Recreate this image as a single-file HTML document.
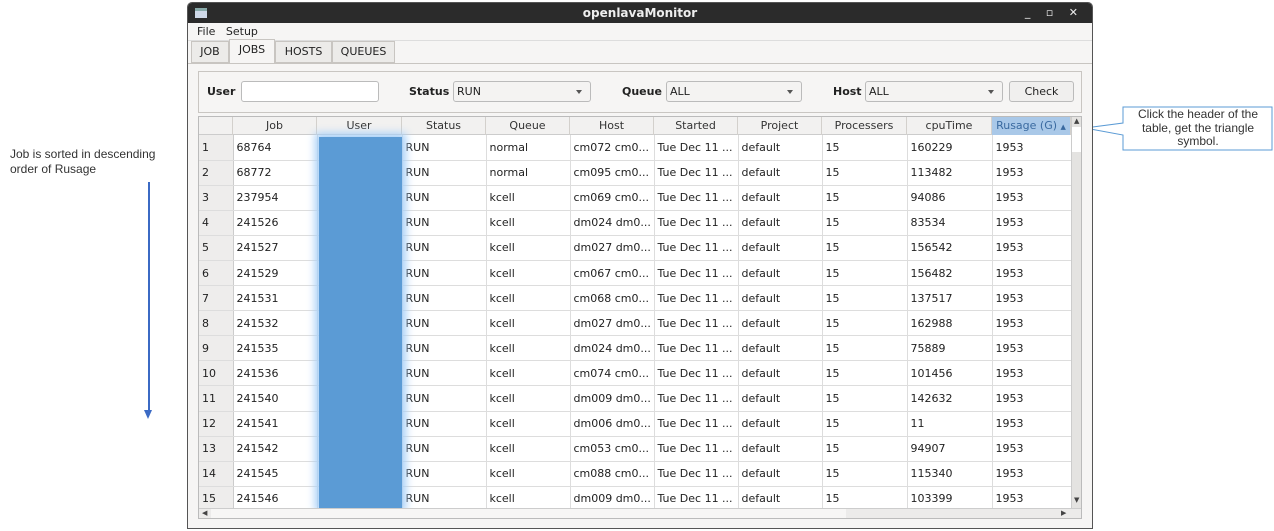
<!DOCTYPE html>
<html><head><meta charset="utf-8"><style>
*{margin:0;padding:0;box-sizing:border-box}
body{width:1274px;height:531px;background:#fff;position:relative;overflow:hidden;font-family:"DejaVu Sans","Liberation Sans",sans-serif;font-size:11px;color:#222}
.a{position:absolute}
.win{left:187px;top:2px;width:906px;height:527px;background:#f6f5f4;border:1px solid #555;border-radius:5px 5px 0 0;overflow:hidden}
.title{left:0;top:0;width:904px;height:20px;background:#2b2b2b;color:#eee;font-weight:bold;font-size:12px;text-align:center;line-height:20px}
.tab{top:39px;height:22px;border:1px solid #c8c5c1;background:#ecebe9;line-height:20px;text-align:center}
.filt{left:10px;top:68px;width:884px;height:42px;border:1px solid #c9c6c2;background:#f6f5f4}
.inp{background:#fff;border:1px solid #bbb;border-radius:3px;height:21px;top:78px;line-height:19px;padding-left:3px}
.cmb{background:#f4f3f2;border:1px solid #bbb;border-radius:3px;height:21px;top:78px;line-height:19px;padding-left:3px}
.cmb:after{content:"";position:absolute;right:8px;top:8px;border:3.5px solid transparent;border-top:4px solid #555}
.lbl{top:78px;line-height:21px;font-weight:bold}
table{border-collapse:collapse;table-layout:fixed}
td{height:25.1px;border-right:1px solid #ddd;border-bottom:1px solid #ddd;padding-left:3px;white-space:nowrap;overflow:hidden;background:#fff}
td.n{background:#eeedec;border-right:1px solid #ccc}
.hd{top:116px;height:18px;background:#f2f1f0;border-bottom:1px solid #ccc}
.hd div{position:absolute;top:0;height:18px;line-height:17px;text-align:center;border-right:1px solid #d3d0cc;color:#333}
</style></head><body>
<div class="a" style="left:10px;top:147px;font-family:'Liberation Sans',sans-serif;font-size:12px;line-height:15px;color:#333">Job is sorted in descending<br>order of Rusage</div>
<div class="a" style="left:148px;top:182px;width:1.5px;height:230px;background:#3b6ac4"></div>
<div class="a" style="left:144px;top:410px;border:4.5px solid transparent;border-top:9px solid #3b6ac4"></div>
<svg class="a" style="left:1080px;top:105px" width="194" height="50"><path d="M43 2H192V45H43V30L5 23L43 18Z" fill="#fff" stroke="#5b9bd5" stroke-width="1"/></svg>
<div class="a" style="left:1128px;top:108px;width:140px;text-align:center;font-family:'Liberation Sans',sans-serif;font-size:12px;line-height:13.5px;color:#333">Click the header of the table, get the triangle symbol.</div>

<div class="a win">
<div class="a title">openlavaMonitor<span class="a" style="left:7px;top:5px;width:12px;height:10px;background:#cfd8e8;border-top:3px solid #8aa"></span><span class="a" style="right:8px;top:0;font-weight:normal;font-size:11px;letter-spacing:6px">_ ▫ ✕</span></div>
<div class="a" style="left:9px;top:21px;line-height:16px">File&nbsp;&nbsp; Setup</div>
<div class="a" style="left:0;top:37px;width:904px;border-top:1px solid #ddd"></div>
<div class="a tab" style="left:3px;width:38px;top:38px">JOB</div>
<div class="a tab" style="left:41px;width:46px;top:36px;height:25px;background:#f6f5f4;border-bottom:none">JOBS</div>
<div class="a tab" style="left:87px;width:57px;top:38px">HOSTS</div>
<div class="a tab" style="left:144px;width:63px;top:38px">QUEUES</div>
<div class="a" style="left:0;top:60px;width:904px;border-top:1px solid #c8c5c1"></div>
<div class="a filt"></div>
<div class="a lbl" style="left:19px">User</div>
<div class="a inp" style="left:53px;width:138px"></div>
<div class="a lbl" style="left:221px">Status</div>
<div class="a cmb" style="left:265px;width:138px">RUN</div>
<div class="a lbl" style="left:434px">Queue</div>
<div class="a cmb" style="left:478px;width:136px">ALL</div>
<div class="a lbl" style="left:645px">Host</div>
<div class="a cmb" style="left:677px;width:138px">ALL</div>
<div class="a" style="left:821px;top:78px;width:65px;height:21px;border:1px solid #bbb;border-radius:3px;background:#f0efee;text-align:center;line-height:19px">Check</div>

<div class="a" style="left:10px;top:113px;width:884px;height:403px;border:1px solid #bbb;background:#fff;overflow:hidden">
<div class="a hd" style="left:0;top:0;width:872px">
<div style="left:0;width:34px"></div><div style="left:34px;width:84px">Job</div><div style="left:118px;width:85px">User</div><div style="left:203px;width:84px">Status</div><div style="left:287px;width:84px">Queue</div><div style="left:371px;width:84px">Host</div><div style="left:455px;width:84px">Started</div><div style="left:539px;width:84px">Project</div><div style="left:623px;width:85px">Processers</div><div style="left:708px;width:85px">cpuTime</div><div style="left:793px;width:79px;background:#a9c8e8;color:#3a6aa0">Rusage (G) <span style="font-size:7px">▲</span></div>
</div>
<table class="a" style="left:0;top:18px;width:872px">
<colgroup><col style="width:34px"><col style="width:84px"><col style="width:85px"><col style="width:84px"><col style="width:84px"><col style="width:84px"><col style="width:84px"><col style="width:84px"><col style="width:85px"><col style="width:85px"><col style="width:79px"></colgroup>
<tr><td class="n">1</td><td>68764</td><td></td><td>RUN</td><td>normal</td><td>cm072 cm0...</td><td>Tue Dec 11 ...</td><td>default</td><td>15</td><td>160229</td><td>1953</td></tr>
<tr><td class="n">2</td><td>68772</td><td></td><td>RUN</td><td>normal</td><td>cm095 cm0...</td><td>Tue Dec 11 ...</td><td>default</td><td>15</td><td>113482</td><td>1953</td></tr>
<tr><td class="n">3</td><td>237954</td><td></td><td>RUN</td><td>kcell</td><td>cm069 cm0...</td><td>Tue Dec 11 ...</td><td>default</td><td>15</td><td>94086</td><td>1953</td></tr>
<tr><td class="n">4</td><td>241526</td><td></td><td>RUN</td><td>kcell</td><td>dm024 dm0...</td><td>Tue Dec 11 ...</td><td>default</td><td>15</td><td>83534</td><td>1953</td></tr>
<tr><td class="n">5</td><td>241527</td><td></td><td>RUN</td><td>kcell</td><td>dm027 dm0...</td><td>Tue Dec 11 ...</td><td>default</td><td>15</td><td>156542</td><td>1953</td></tr>
<tr><td class="n">6</td><td>241529</td><td></td><td>RUN</td><td>kcell</td><td>cm067 cm0...</td><td>Tue Dec 11 ...</td><td>default</td><td>15</td><td>156482</td><td>1953</td></tr>
<tr><td class="n">7</td><td>241531</td><td></td><td>RUN</td><td>kcell</td><td>cm068 cm0...</td><td>Tue Dec 11 ...</td><td>default</td><td>15</td><td>137517</td><td>1953</td></tr>
<tr><td class="n">8</td><td>241532</td><td></td><td>RUN</td><td>kcell</td><td>dm027 dm0...</td><td>Tue Dec 11 ...</td><td>default</td><td>15</td><td>162988</td><td>1953</td></tr>
<tr><td class="n">9</td><td>241535</td><td></td><td>RUN</td><td>kcell</td><td>dm024 dm0...</td><td>Tue Dec 11 ...</td><td>default</td><td>15</td><td>75889</td><td>1953</td></tr>
<tr><td class="n">10</td><td>241536</td><td></td><td>RUN</td><td>kcell</td><td>cm074 cm0...</td><td>Tue Dec 11 ...</td><td>default</td><td>15</td><td>101456</td><td>1953</td></tr>
<tr><td class="n">11</td><td>241540</td><td></td><td>RUN</td><td>kcell</td><td>dm009 dm0...</td><td>Tue Dec 11 ...</td><td>default</td><td>15</td><td>142632</td><td>1953</td></tr>
<tr><td class="n">12</td><td>241541</td><td></td><td>RUN</td><td>kcell</td><td>dm006 dm0...</td><td>Tue Dec 11 ...</td><td>default</td><td>15</td><td>11</td><td>1953</td></tr>
<tr><td class="n">13</td><td>241542</td><td></td><td>RUN</td><td>kcell</td><td>cm053 cm0...</td><td>Tue Dec 11 ...</td><td>default</td><td>15</td><td>94907</td><td>1953</td></tr>
<tr><td class="n">14</td><td>241545</td><td></td><td>RUN</td><td>kcell</td><td>cm088 cm0...</td><td>Tue Dec 11 ...</td><td>default</td><td>15</td><td>115340</td><td>1953</td></tr>
<tr><td class="n">15</td><td>241546</td><td></td><td>RUN</td><td>kcell</td><td>dm009 dm0...</td><td>Tue Dec 11 ...</td><td>default</td><td>15</td><td>103399</td><td>1953</td></tr>
</table>
<div class="a" style="left:120px;top:20px;width:83px;height:371px;background:#5b9bd5;box-shadow:0 0 8px 4px #a8d0f8"></div>
<div class="a" style="left:872px;top:0;width:11px;height:391px;background:#e4e3e1;border-left:1px solid #ccc"><div class="a" style="left:0;top:10px;width:10px;height:25px;background:#fff"></div><span class="a" style="left:2px;top:0;font-size:7px;color:#444">▲</span><span class="a" style="left:2px;top:379px;font-size:7px;color:#444">▼</span></div>
<div class="a" style="left:0;top:391px;width:883px;height:11px;background:#ecebea;border-top:1px solid #ccc"><div class="a" style="left:12px;top:0;width:635px;height:10px;background:#f7f6f5"></div><span class="a" style="left:3px;top:0;font-size:7px;color:#444">◀</span><span class="a" style="left:862px;top:0;font-size:7px;color:#444">▶</span></div>
</div>
</div>
</body></html>
